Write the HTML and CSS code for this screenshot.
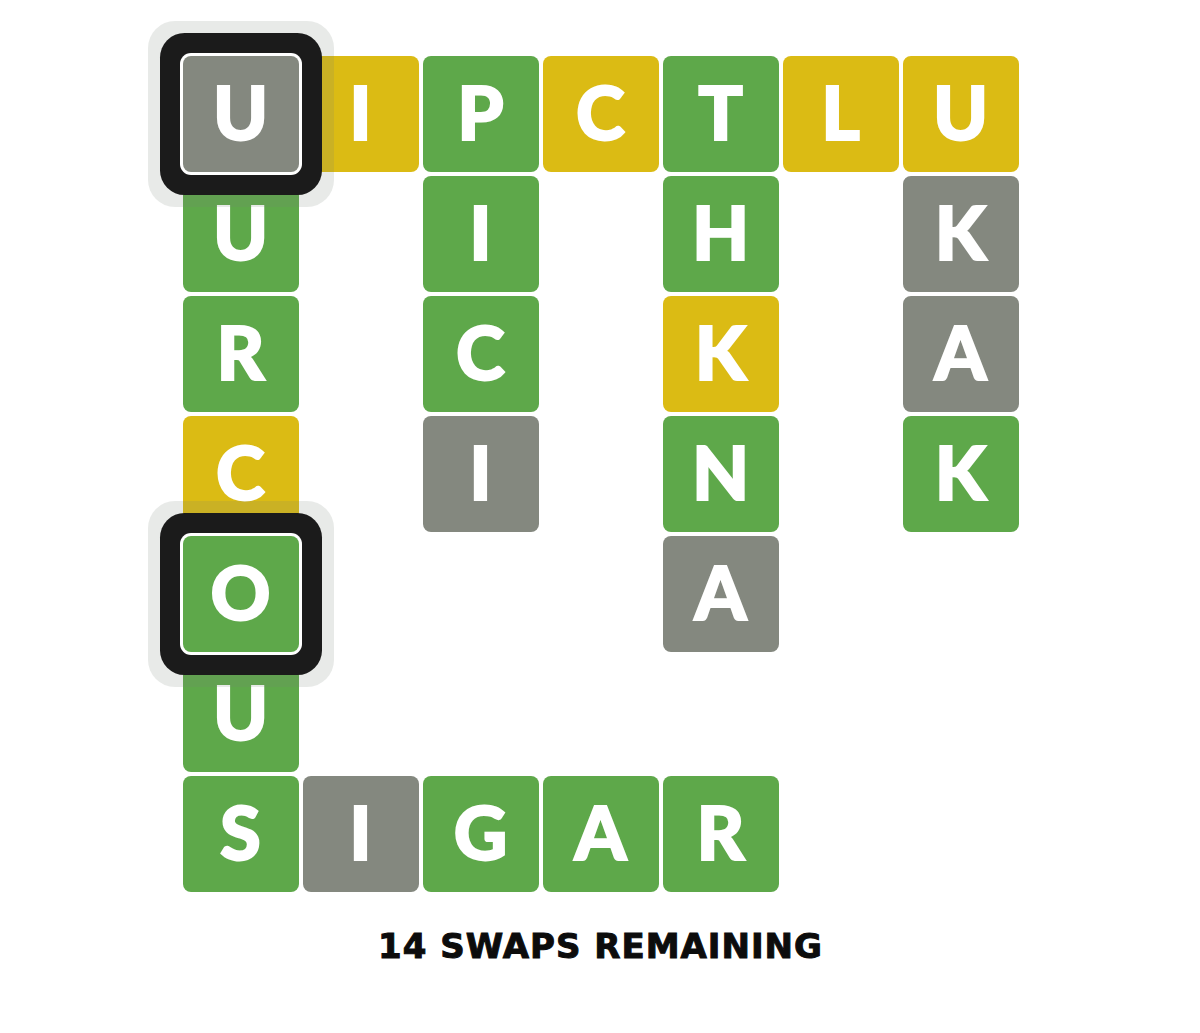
FILE: index.html
```html
<!DOCTYPE html>
<html lang="en">
<head>
<meta charset="utf-8">
<title>Swaps</title>
<link rel="stylesheet" href="styles.css">
</head>
<body>
<main class="game">
  <div class="board">
    <!-- row 1 -->
    <div class="tile gray selected">U</div>
    <div class="tile yellow">I</div>
    <div class="tile green">P</div>
    <div class="tile yellow">C</div>
    <div class="tile green">T</div>
    <div class="tile yellow">L</div>
    <div class="tile yellow">U</div>
    <!-- row 2 -->
    <div class="tile green">U</div>
    <div class="cell"></div>
    <div class="tile green">I</div>
    <div class="cell"></div>
    <div class="tile green">H</div>
    <div class="cell"></div>
    <div class="tile gray">K</div>
    <!-- row 3 -->
    <div class="tile green">R</div>
    <div class="cell"></div>
    <div class="tile green">C</div>
    <div class="cell"></div>
    <div class="tile yellow">K</div>
    <div class="cell"></div>
    <div class="tile gray">A</div>
    <!-- row 4 -->
    <div class="tile yellow">C</div>
    <div class="cell"></div>
    <div class="tile gray">I</div>
    <div class="cell"></div>
    <div class="tile green">N</div>
    <div class="cell"></div>
    <div class="tile green">K</div>
    <!-- row 5 -->
    <div class="tile green selected">O</div>
    <div class="cell"></div>
    <div class="cell"></div>
    <div class="cell"></div>
    <div class="tile gray">A</div>
    <div class="cell"></div>
    <div class="cell"></div>
    <!-- row 6 -->
    <div class="tile green">U</div>
    <div class="cell"></div>
    <div class="cell"></div>
    <div class="cell"></div>
    <div class="cell"></div>
    <div class="cell"></div>
    <div class="cell"></div>
    <!-- row 7 -->
    <div class="tile green">S</div>
    <div class="tile gray">I</div>
    <div class="tile green">G</div>
    <div class="tile green">A</div>
    <div class="tile green">R</div>
    <div class="cell"></div>
    <div class="cell"></div>
  </div>
  <p class="swaps">14 SWAPS REMAINING</p>
</main>
</body>
</html>
```

FILE: styles.css
```css
html, body {
  margin: 0;
  padding: 0;
  background: #ffffff;
}

body {
  font-family: "Lato", "Open Sans", "DejaVu Sans", sans-serif;
}

.game {
  display: flex;
  flex-direction: column;
  align-items: center;
  padding-top: 56px;
  padding-left: 1px;
}

.board {
  display: grid;
  grid-template-columns: repeat(7, 116px);
  grid-auto-rows: 116px;
  gap: 4px;
}

.tile {
  display: flex;
  align-items: center;
  justify-content: center;
  border-radius: 8px;
  color: #ffffff;
  font-size: 74px;
  font-weight: 900;
  line-height: 1;
  padding-bottom: 4px;
  box-sizing: border-box;
  -webkit-text-stroke: 2px #ffffff;
}

.green { background: #5ea84a; }
.yellow { background: #dbbb14; }
.gray { background: #84887f; }

/* the two tiles picked for a swap */
.selected {
  position: relative;
  z-index: 2;
  box-shadow:
    0 0 0 3px #ffffff,
    0 0 0 23px #1b1b1b,
    0 0 0 35px rgba(120, 132, 120, 0.17);
}

.swaps {
  margin: 34px 0 0;
  font-family: "DejaVu Sans", "Open Sans", sans-serif;
  font-size: 34px;
  font-weight: 700;
  letter-spacing: 1px;
  line-height: 40px;
  color: #0c0c0c;
  -webkit-text-stroke: 1px #0c0c0c;
}
```
